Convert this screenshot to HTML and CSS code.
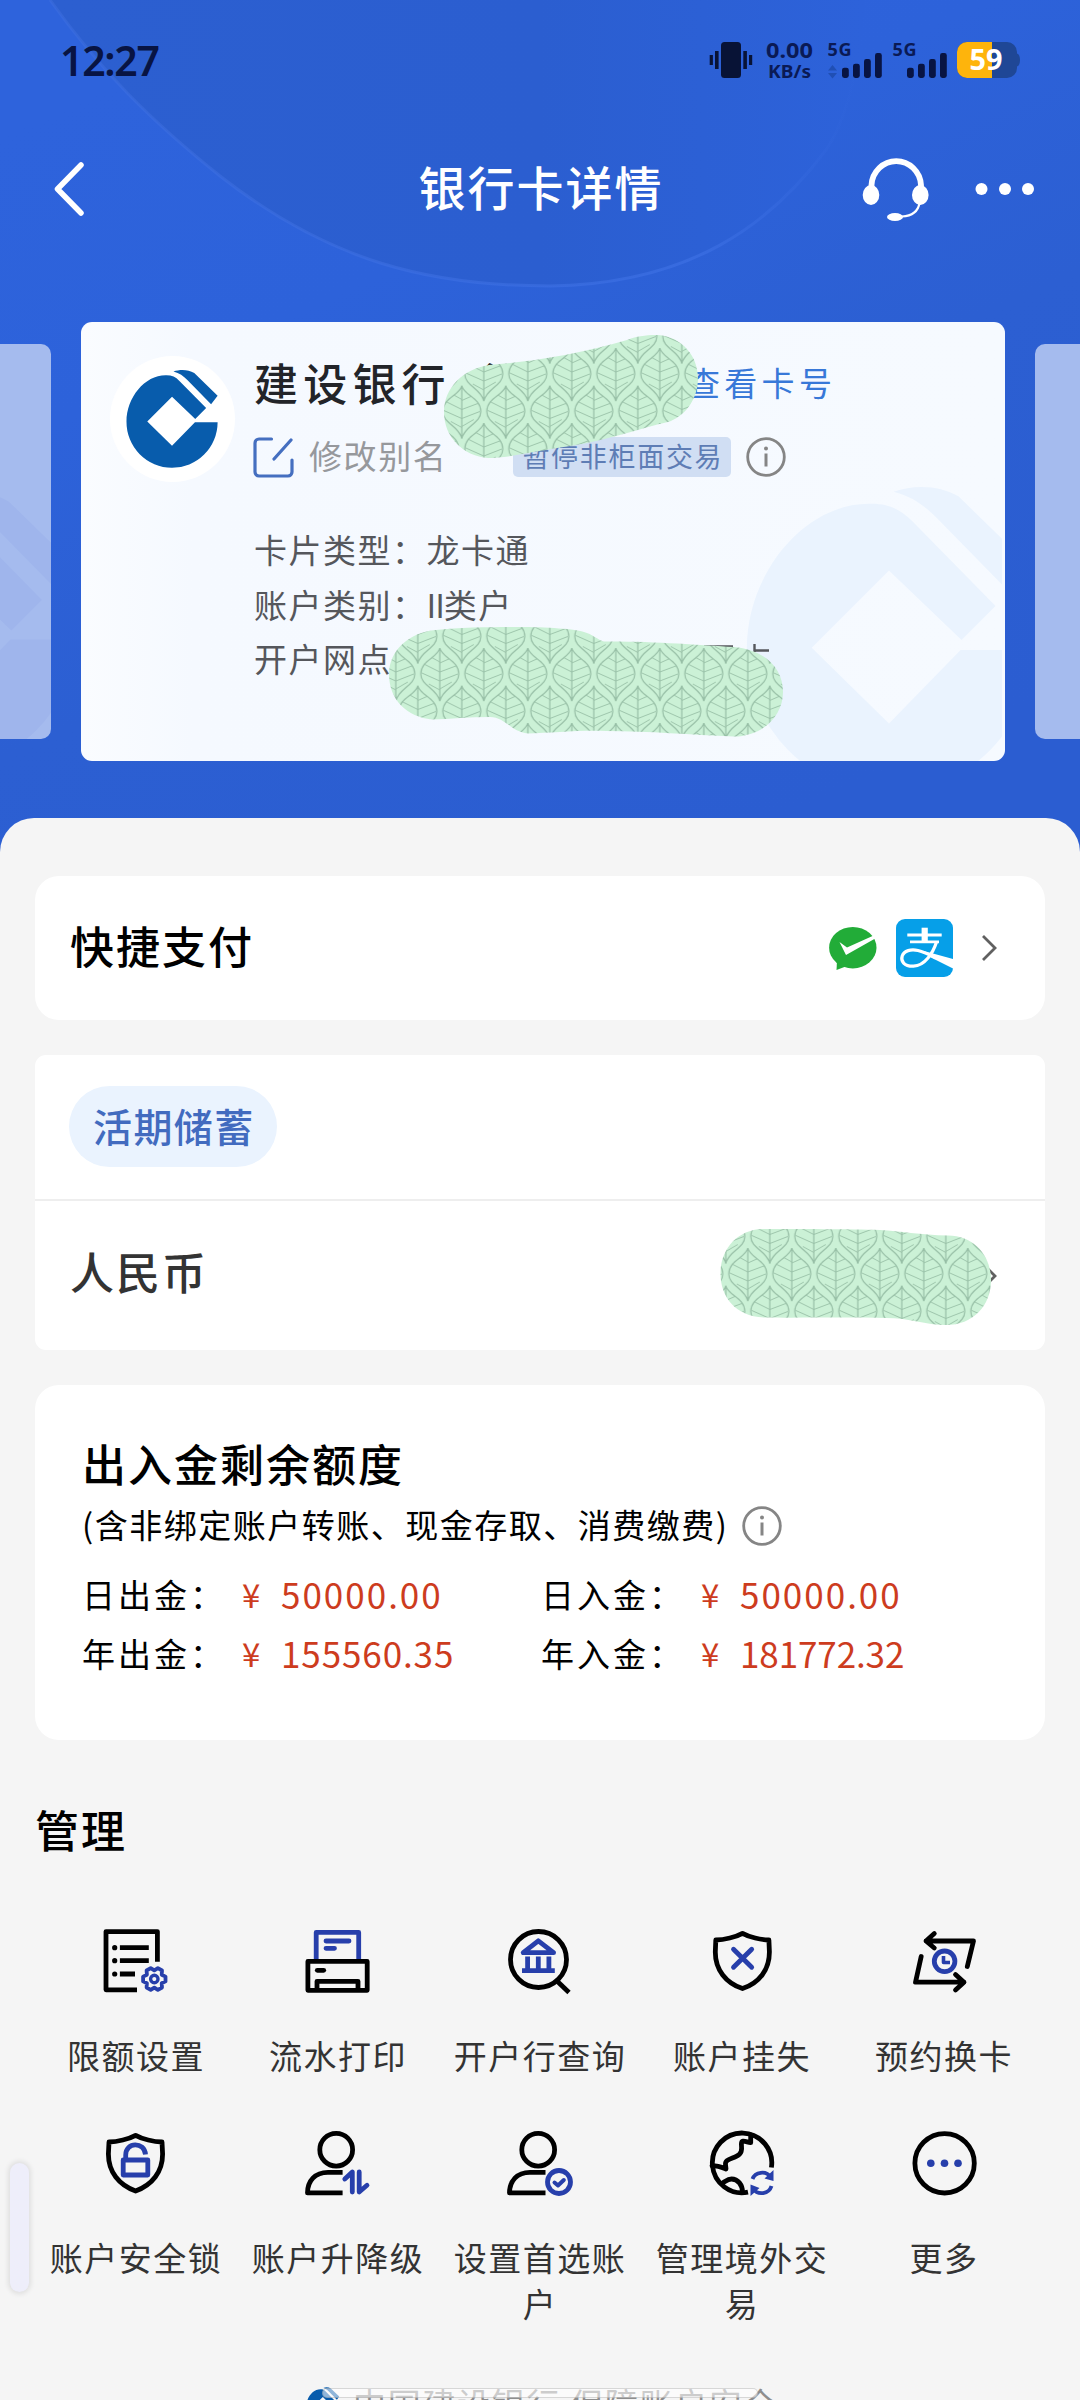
FILE: index.html
```html
<!DOCTYPE html>
<html lang="zh-CN">
<head>
<meta charset="utf-8">
<title>银行卡详情</title>
<link rel="stylesheet" href="styles.css">
</head>
<body>
<svg class="defs" width="0" height="0">
  <defs>
    <symbol id="ccb" viewBox="126 369 94 101">
      <path d="M218.6 422.7A46 46.3 0 0 1 126.5 422.3C126.5 398 145 375.4 166 375.4C172 375.2 176 377 180 381L207 408.5L196 419.5L172.5 397L147.5 422L172.5 446.5L195.7 422.7Z"/>
      <path d="M174 371.5C181 369 189 369.5 195 373L218.6 396L212 404.5L188 380C184 376 180 373 174 371.5Z"/>
    </symbol>
    <symbol id="info" viewBox="0 0 40 40">
      <circle cx="20" cy="20" r="18.3" fill="none" stroke="#858585" stroke-width="2.8"/>
      <circle cx="20" cy="11.5" r="2" fill="#858585"/>
      <path d="M20 16.5V29.5" stroke="#858585" stroke-width="3"/>
    </symbol>
    <g id="leaf" fill="none" stroke="#97bfa6" stroke-width="1.2">
      <path d="M0 0C2 10 19 12 19 26C19 38 3 40 0 53C-3 40-19 38-19 26C-19 12-2 10 0 0ZM0 0V53"/>
      <path stroke-width=".9" d="M0 14L-8 9.5M0 24L-16 16M0 33L-18 25M0 42L-11 36M0 15L9 11M0 24L16 18M0 33L18 26M0 41L12 34"/>
    </g>
    <pattern id="leaves" patternUnits="userSpaceOnUse" x="549.8" y="348" width="44" height="75">
      <rect width="44" height="75" fill="#cbf1d6"/>
      <use href="#leaf" x="22" y="0"/><use href="#leaf" x="22" y="75"/>
      <use href="#leaf" x="0" y="37.5"/><use href="#leaf" x="44" y="37.5"/>
      <use href="#leaf" x="0" y="-37.5"/><use href="#leaf" x="44" y="-37.5"/>
    </pattern>
    <linearGradient id="sky" x1=".1" y1=".1" x2=".6" y2="1">
      <stop offset="0" stop-color="#2e63dc"/><stop offset=".3" stop-color="#2d62da"/><stop offset=".6" stop-color="#2c5fd2"/><stop offset="1" stop-color="#2b5dd1"/>
    </linearGradient>
    <linearGradient id="bowl" x1="0" y1="0" x2="1" y2="0">
      <stop offset="0" stop-color="#2c5fd0"/><stop offset=".6" stop-color="#2b5ed0"/><stop offset="1" stop-color="#2d62da"/>
    </linearGradient>
    <linearGradient id="rim" x1="0" y1="0" x2="1" y2="0">
      <stop offset="0" stop-color="#4272e2" stop-opacity=".4"/><stop offset=".8" stop-color="#3f72e6" stop-opacity=".6"/><stop offset="1" stop-color="#3f72e6" stop-opacity="0"/>
    </linearGradient>
  </defs>
</svg>

<div class="page">
  <svg class="backdrop" viewBox="0 0 1080 880">
    <rect width="1080" height="880" fill="url(#sky)"/>
    <path d="M50 0C100 70 150 120 220 176C330 262 430 286 550 286C690 284 770 225 826 150C850 110 862 60 865 0Z" fill="url(#bowl)"/>
    <path d="M50 0C100 70 150 120 220 176C330 262 430 286 550 286C690 284 770 225 826 150C840 130 850 100 858 60" fill="none" stroke="url(#rim)" stroke-width="3"/>
  </svg>

  <header class="status">
    <span class="time">12:27</span>
    <svg class="status-icons" viewBox="708 30 314 60" width="314" height="60">
      <g fill="#081336">
        <rect x="721" y="42" width="20" height="36" rx="3.5"/>
        <rect x="715" y="51" width="3.6" height="18"/><rect x="709.7" y="55" width="3.2" height="10"/>
        <rect x="743.3" y="51" width="3.6" height="18"/><rect x="749" y="55" width="3.2" height="10"/>
      </g>
      <g fill="#0a1a55" class="net">
        <text x="766" y="57.5" font-size="20.5" textLength="47" lengthAdjust="spacingAndGlyphs">0.00</text>
        <text x="768" y="77.6" font-size="17.5" textLength="43" lengthAdjust="spacingAndGlyphs">KB/s</text>
        <text x="827.5" y="55.8" font-size="18" textLength="24">5G</text>
        <text x="892.5" y="55.8" font-size="18" textLength="24">5G</text>
      </g>
      <path d="M832.5 65L837 70.5H828ZM832.5 78.5L837 73H828Z" fill="#204fb4"/>
      <g fill="#081443">
        <rect x="842" y="67.7" width="6.8" height="10.3" rx="2.4"/><rect x="853" y="63.7" width="6.8" height="14.3" rx="2.4"/><rect x="864" y="59" width="6.8" height="19" rx="2.4"/><rect x="875" y="53" width="6.8" height="25" rx="2.4"/>
        <rect x="907" y="67.7" width="6.8" height="10.3" rx="2.4"/><rect x="918" y="63.7" width="6.8" height="14.3" rx="2.4"/><rect x="929" y="59" width="6.8" height="19" rx="2.4"/><rect x="940" y="53" width="6.8" height="25" rx="2.4"/>
      </g>
      <rect x="957" y="42" width="60" height="36" rx="10" fill="#1f4796"/>
      <path d="M1017 53.5C1021 54 1021 66 1017 66.5Z" fill="#1f4796"/>
      <path d="M967 42H992V78H967A10 10 0 0 1 957 68V52A10 10 0 0 1 967 42Z" fill="#feb40c"/>
      <text class="net" x="969.5" y="70" font-size="28" textLength="33" lengthAdjust="spacingAndGlyphs" fill="#fff">59</text>
    </svg>
  </header>

  <nav class="nav">
    <svg class="back" viewBox="0 0 36 60" width="36" height="60"><path d="M29 6L5.5 30L29 54" fill="none" stroke="#fff" stroke-width="5.5" stroke-linecap="round" stroke-linejoin="round"/></svg>
    <h1>银行卡详情</h1>
    <div class="nav-actions">
      <svg viewBox="860 152 72 72" width="72" height="72">
        <path d="M871.5 188V184A24.8 25.5 0 0 1 921 184V188" fill="none" stroke="#fff" stroke-width="5.8"/>
        <ellipse cx="871" cy="194" rx="8.3" ry="10" fill="#fff"/><ellipse cx="920.3" cy="194" rx="8.3" ry="10" fill="#fff"/>
        <path d="M919.5 202C918 211 911 215 902 215.5" fill="none" stroke="#fff" stroke-width="2.2"/>
        <ellipse cx="895" cy="216" rx="8" ry="4" fill="#fff"/>
      </svg>
      <svg viewBox="0 0 60 14" width="60" height="14"><g fill="#fff"><circle cx="6.5" cy="7" r="6"/><circle cx="30" cy="7" r="6"/><circle cx="53" cy="7" r="6"/></g></svg>
    </div>
  </nav>

  <section class="carousel">
    <div class="peek peek-left"><svg class="peek-mark"><use href="#ccb"/></svg></div>
    <article class="bank-card">
      <div class="mark"><svg width="291" height="312"><use href="#ccb"/></svg></div>
      <div class="logo"><svg width="93" height="100"><use href="#ccb"/></svg></div>
      <div class="card-info">
        <div class="name-row"><strong>建设银行（</strong><a>查看卡号</a></div>
        <div class="alias-row">
          <svg class="edit" viewBox="0 0 41 41" width="41" height="41"><path d="M18.5 2H6A4 4 0 0 0 2 6V35A4 4 0 0 0 6 39H35A4 4 0 0 0 39 35V23M38 3L21 22" fill="none" stroke="#456fc0" stroke-width="3.2" stroke-linecap="round"/></svg>
          <span class="alias">修改别名</span>
          <span class="tag">暂停非柜面交易</span>
          <svg class="info" width="40" height="40"><use href="#info"/></svg>
        </div>
        <div class="facts">
          <p>卡片类型：龙卡通</p>
          <p>账户类别：<span class="roman">II</span>类户</p>
          <p>开户网点</p>
        </div>
      </div>
      <svg class="cover cover-name" viewBox="440 330 262 132" width="262" height="132"><path fill="url(#leaves)" d="M489 365Q528 362 565 355Q600 348 627 340C640 335 650 335 658 335C683 337 698 357 698 378C698 400 684 417 668 422C640 428 610 440 570 446C540 450 510 458 488 458C464 456 444 438 444 412C444 388 463 369 489 365Z"/></svg>
      <svg class="cover cover-branch" viewBox="385 622 402 120" width="402" height="120">
        <path d="M682 644.5V650M704 646.5H733M754.5 644V652M754.5 650.5H769" fill="none" stroke="#55575c" stroke-width="2.4"/>
        <path fill="url(#leaves)" d="M436 630C460 627 500 627 520 627C545 627 577 629 584 632C592 634 598 640 604 641.5C650 641 700 645 734 647C765 650 783 668 783 692C783 716 763 736 734 736.5C690 735 650 731 606 731C580 730 550 733 528 733.5C511 732 505 717 490 717C470 717 450 719 432 719.5C407 717 389 700 389 674C389 650 410 632 436 630Z"/>
      </svg>
    </article>
    <div class="peek peek-right"></div>
  </section>

  <main class="sheet">
    <section class="panel quick">
      <h2>快捷支付</h2>
      <div class="pay">
        <svg viewBox="0 0 48 43" width="48" height="43"><path d="M8 34L7.5 43L18 39Z" fill="#22ac38"/><ellipse cx="23.8" cy="20.7" rx="23.7" ry="20.7" fill="#22ac38"/><path d="M10.5 15L18 20.5L48 7V10.5L17 28Z" fill="#fff"/></svg>
        <svg class="alipay" viewBox="0 0 57 58" width="57" height="58"><rect width="57" height="58" rx="9" fill="#069fe8"/><path d="M11.3 16H45.7M14 22.8H43" stroke="#fff" stroke-width="2.8"/><path d="M28.7 8.7V23" stroke="#fff" stroke-width="6.2"/><path d="M40.5 23C37 34 29 46.5 17.5 47.2C8 47.5 4.5 42 6.2 37C8 31.5 15 30 22 31.5C28 33 34 36 40 39" fill="none" stroke="#fff" stroke-width="3.2"/><path d="M27 31.8L57 40V49.5L34 38Z" fill="#fff"/></svg>
        <svg class="chev" viewBox="0 0 16 28" width="16" height="28"><path d="M2 2L14 14L2 26" fill="none" stroke="#606060" stroke-width="2.8"/></svg>
      </div>
    </section>

    <section class="panel deposit">
      <div class="deposit-head"><span class="pill">活期储蓄</span></div>
      <div class="deposit-row">
        <span>人民币</span>
        <svg class="chev" viewBox="0 0 16 28" width="16" height="28"><path d="M2 2L14 14L2 26" fill="none" stroke="#606060" stroke-width="2.8"/></svg>
        <svg class="cover cover-balance" viewBox="716 1225 280 104" width="280" height="104"><path fill="url(#leaves)" d="M762 1229C800 1229 850 1229 880 1230C900 1231 920 1235 948 1235.5C975 1236 991 1256 991 1280C991 1306 973 1325 946 1325C925 1325 910 1318 886 1318C850 1317 800 1318 765 1317.5C735 1317 720.5 1296 720.5 1274C720.5 1248 738 1230 762 1229Z"/></svg>
      </div>
    </section>

    <section class="panel quota">
      <h2>出入金剩余额度</h2>
      <div class="note"><span>(含非绑定账户转账、现金存取、消费缴费)</span><svg width="40" height="40"><use href="#info"/></svg></div>
      <dl class="amounts">
        <dt>日出金：</dt><dd class="loose"><i>¥</i>50000.00</dd><dt>日入金：</dt><dd class="loose"><i>¥</i>50000.00</dd>
        <dt>年出金：</dt><dd><i>¥</i>155560.35</dd><dt>年入金：</dt><dd class="tight"><i>¥</i>181772.32</dd>
      </dl>
    </section>

    <h2 class="manage-title">管理</h2>
    <ul class="grid">
      <li><svg viewBox="0 0 72 72"><path d="M37 64.8H6V6.6H57.4V36.7"/><path d="M19.9 22.7H48.8M19.9 35.7H48.8M19.9 49H35"/><g class="dot"><circle cx="14.7" cy="22.7" r="2.6"/><circle cx="14.7" cy="35.7" r="2.6"/><circle cx="14.7" cy="49" r="2.6"/></g><g class="b" transform="translate(54.3 54)"><path stroke-width="3.8" d="M11.2-2.4V2.4L7.4 4.3L7.7 8.5L3.6 10.9L0 8.6L-3.6 10.9L-7.7 8.5L-7.4 4.3L-11.2 2.4V-2.4L-7.4-4.3L-7.7-8.5L-3.6-10.9L0-8.6L3.6-10.9L7.7-8.5L7.4-4.3Z"/><circle r="3.7" stroke-width="3.4"/></g></svg><span>限额设置</span></li>
      <li><svg viewBox="0 0 72 72"><path class="b" d="M14.2 35V7.4H56.7V35"/><path class="b r" d="M24 16H47M24 23.3H32.5"/><path d="M5.9 36.4H65.2V65.3H5.9Z"/><path d="M15 65V56.3H56V65"/><path class="r" d="M15.3 45.3H21.7"/></svg><span>流水打印</span></li>
      <li><svg viewBox="0 0 72 72"><circle cx="34.5" cy="34.5" r="28"/><path d="M53.5 56.5L65 67.5"/><path class="b" d="M34.3 15.8L19.2 27.7H49.6Z"/><path class="b" d="M23.6 31.5V44M34.3 31.5V44M44.9 31.5V44M18 45.7H50.8"/></svg><span>开户行查询</span></li>
      <li><svg viewBox="0 0 72 72"><path d="M36.5 8.3C30 12 18 14.8 9.8 15L9.3 27C9.3 45 20 58 36.5 63.6C53 58 63.4 45 63.4 27L62.9 15C55 14.8 43 12 36.5 8.3Z"/><path class="b r" d="M27.5 24.2L45.7 42.2M45.7 24.2L27.5 42.2"/></svg><span>账户挂失</span></li>
      <li><svg viewBox="0 0 72 72"><path class="r" d="M26.3 8.5L18 16L26.3 23M18 16H65.5L59.3 41.5M13.2 31.5L7.5 57.2H56M47.5 49.5L56 57.2L47.5 65"/><circle class="b" cx="36.6" cy="36.3" r="10.3"/><path class="b" stroke-width="3.6" d="M35.5 31V37.5H42"/></svg><span>预约换卡</span></li>
      <li><svg viewBox="0 0 72 72"><path d="M35.6 8.3C29 12 17 14.8 9 15L8.4 27C8.4 45 19 58 35.6 64C52 58 62.6 45 62.6 27L62 15C54 14.8 42 12 35.6 8.3Z"/><path class="b" d="M23.2 33H47.8V48H23.2Z"/><path class="b" d="M25.7 32V28C25.7 14.5 44.5 14.5 45.5 27.5"/></svg><span>账户安全锁</span></li>
      <li><svg viewBox="0 0 72 72"><circle cx="34.2" cy="22.7" r="16.4"/><path d="M40.6 45.3H26C13 45.3 5.5 54 5.5 65.9H40.6"/><path class="b r" d="M42.8 52L50.3 45V65M57.2 45V65L65 58.3"/></svg><span>账户升降级</span></li>
      <li><svg viewBox="0 0 72 72"><circle cx="34.2" cy="22.7" r="16.4"/><path d="M41.5 45.3H26C13 45.3 5.5 54 5.5 65.9H41.5"/><circle class="b" cx="55" cy="55" r="11.5"/><path class="b r" stroke-width="4" d="M50.5 55.5L54 58.5L59.8 53"/></svg><span>设置首选账户</span></li>
      <li><svg viewBox="0 0 72 72"><path d="M65.4 40.5A29.7 29.9 0 1 0 42 65.2"/><path class="r" d="M44.7 8V15.7C40 15 35.4 12 35.4 17C36 23 36 27 30 29.5C23 32.5 19 33 19.5 37.5L20 42C15 40 12 38.7 6 38.7"/><path class="r" d="M16.5 56C20 54 21.7 52 25.5 52C32 52 36.5 58 36.5 65"/><g class="b thin"><path d="M46.5 52C49 45 60 43 65 50.5M65.5 59C63 67 52 69 47 61.5"/></g><path class="bf" d="M67.5 43V54L58.5 51.5ZM44.5 69V57.5L53.5 61Z"/></svg><span>管理境外交易</span></li>
      <li><svg viewBox="0 0 72 72"><circle cx="36.6" cy="36.3" r="29.7"/><g class="bf"><circle cx="22.8" cy="36.3" r="3.8"/><circle cx="36.5" cy="36.3" r="3.8"/><circle cx="50" cy="36.3" r="3.8"/></g></svg><span>更多</span></li>
    </ul>

    <footer class="foot"><svg width="34" height="36"><use href="#ccb"/></svg><span>中国建设银行 保障账户安全</span></footer>
  </main>

  <div class="side-handle"></div>
  <div class="home-bar"></div>
</div>
</body>
</html>
```
FILE: styles.css
```css
* { box-sizing: border-box; margin: 0; padding: 0; }

body {
  width: 1080px;
  height: 2400px;
  overflow: hidden;
  background: #f5f5f5;
  font-family: "Noto Sans CJK SC", "Noto Sans", sans-serif;
  color: #000;
}

svg { display: block; flex: none; }
.defs { position: absolute; }

.page { position: relative; height: 2400px; overflow: hidden; }
.backdrop { position: absolute; left: 0; top: 0; width: 1080px; height: 880px; }

.status {
  position: relative;
  height: 120px;
  padding: 0 58px 0 60px;
  display: flex;
  align-items: center;
  justify-content: space-between;
}
.time {
  font: 600 41px/60px "Noto Sans", sans-serif;
  letter-spacing: -1.3px;
  margin-top: -1px;
  color: #081443;
}
.net { font-family: "Noto Sans", sans-serif; font-weight: 700; }

.nav {
  position: relative;
  height: 138px;
  padding: 0 45px 0 52px;
  display: grid;
  grid-template-columns: 1fr auto 1fr;
  align-items: center;
}
.nav h1 {
  font-size: 47px;
  line-height: 60px;
  font-weight: 500;
  letter-spacing: 2px;
  color: #fff;
  margin: -7px 0 0 -5px;
}
.nav-actions { display: flex; align-items: center; justify-content: flex-end; gap: 43px; }

.carousel {
  position: relative;
  padding-top: 64px;
  display: flex;
  align-items: center;
  gap: 30px;
}
.peek { position: relative; height: 395px; background: #a5bbee; overflow: hidden; }
.peek-left { width: 51px; border-radius: 0 10px 10px 0; }
.peek-right { width: 45px; border-radius: 10px 0 0 10px; }
.peek-mark { position: absolute; left: -183px; top: 146px; width: 261px; height: 281px; fill: #9fb5ec; }

.bank-card {
  position: relative;
  width: 924px;
  height: 439px;
  padding: 30px 0 0 29px;
  display: flex;
  gap: 19px;
  border-radius: 11px;
  background: linear-gradient(90deg, #fafcff 0, #f5f9ff 12%, #f6faff 100%);
}
.mark {
  position: absolute;
  left: 664px;
  top: 162px;
  width: 257px;
  height: 277px;
  fill: #eaf3fe;
  overflow: hidden;
}
.logo {
  position: relative;
  width: 125px;
  height: 126px;
  margin-top: 4px;
  border-radius: 50%;
  background: #fff;
  display: flex;
  align-items: center;
  justify-content: center;
  fill: #085cac;
}
.card-info { position: relative; }
.name-row { height: 60px; display: flex; align-items: center; white-space: nowrap; }
.name-row strong { font-size: 44px; line-height: 60px; font-weight: 500; letter-spacing: 5.2px; color: #222429; }
.name-row a { margin-left: 187px; font-size: 33px; line-height: 60px; letter-spacing: 4.3px; color: #3878d8; }
.alias-row { height: 50px; margin: 20px 0 0 -1px; display: flex; align-items: center; white-space: nowrap; }
.alias { margin: -5px 0 0 15px; font-size: 33px; line-height: 50px; letter-spacing: 1.6px; color: #96989c; }
.tag {
  width: 218px;
  height: 40px;
  margin-left: 66px;
  padding-left: 9px;
  border-radius: 5px;
  background: #d0def3;
  font-size: 27px;
  line-height: 37px;
  letter-spacing: 1.7px;
  color: #5e7db5;
}
.info { margin-left: 15px; }
.facts { margin-top: 40px; font-size: 33px; line-height: 54.5px; letter-spacing: 1.5px; color: #55575c; white-space: nowrap; }
.roman { letter-spacing: -1px; }

.cover { position: absolute; }
.cover-name { left: 359px; top: 8px; }
.cover-branch { left: 304px; top: 300px; }
.cover-balance { left: 681px; top: 24px; }

.sheet {
  position: relative;
  height: 1582px;
  margin-top: 57px;
  padding: 58px 35px 0;
  border-radius: 34px 34px 0 0;
  background: #f5f5f5;
}
.panel { background: #fff; border-radius: 24px; }
h2 { font-size: 44px; line-height: 60px; font-weight: 500; letter-spacing: 2px; }

.quick { height: 144px; padding: 0 48px 0 35px; display: flex; align-items: center; justify-content: space-between; }
.quick h2 { margin-top: -6px; }
.pay { display: flex; align-items: center; }
.alipay { margin: 0 28px 0 19px; }

.deposit { height: 295px; margin-top: 35px; border-radius: 11px; }
.deposit-head { height: 146px; padding-left: 34px; border-bottom: 2px solid #eee; display: flex; align-items: center; }
.pill {
  height: 81px;
  margin-top: -1px;
  padding: 0 22px 0 24px;
  border-radius: 41px;
  background: #eaf3fe;
  font-size: 39px;
  font-weight: 500;
  line-height: 78px;
  letter-spacing: 1.4px;
  color: #426bbf;
}
.deposit-row {
  position: relative;
  height: 149px;
  padding: 0 48px 0 35px;
  display: flex;
  align-items: center;
  justify-content: space-between;
  font-size: 44px;
  font-weight: 500;
  letter-spacing: 2px;
  color: #333;
}
.deposit-row span { line-height: 60px; margin-top: -10px; }

.quota { height: 355px; margin-top: 35px; padding: 48px 0 0 47px; }
.note { height: 50px; margin-top: 8px; margin-bottom: 14px; display: flex; align-items: center; gap: 14px; font-size: 33px; line-height: 50px; letter-spacing: 1.5px; white-space: nowrap; }
.note span { margin-top: -4px; }
.amounts { display: grid; grid-template-columns: 160px 299px 160px 300px; font-size: 33px; line-height: 58.5px; }
.amounts dt { letter-spacing: 3px; white-space: nowrap; }
.amounts dd { display: flex; font-size: 35px; letter-spacing: 0.9px; color: #cd3c1e; }
.amounts .loose { letter-spacing: 2px; }
.amounts .tight { letter-spacing: -0.1px; }
.amounts i { width: 39px; font-style: normal; font-size: 33px; }

.manage-title { margin: 59px 0 0; }
.grid {
  list-style: none;
  margin-top: 66px;
  display: grid;
  grid-template-columns: repeat(5, 202px);
  grid-template-rows: 202px 240px;
}
.grid li { display: flex; flex-direction: column; align-items: center; gap: 35px; }
.grid svg { width: 72px; height: 72px; fill: none; stroke: #000; stroke-width: 4.8; stroke-linejoin: round; }
.grid .dot { fill: #000; stroke: none; }
.grid .b { stroke: #273fab; }
.grid .bf { fill: #273fab; stroke: none; }
.grid .r { stroke-linecap: round; }
.grid .thin { stroke-width: 3.8; }
.grid span { width: 180px; text-align: center; font-size: 33px; line-height: 46px; letter-spacing: 1.5px; color: #333; }

.foot { height: 50px; margin-top: 13px; display: flex; align-items: center; padding-left: 271px; gap: 13px; fill: #085cac; font-size: 33px; line-height: 50px; letter-spacing: 1.7px; color: #8e8e8e; white-space: nowrap; }
.foot span { margin-top: -4px; }

.side-handle {
  position: absolute;
  left: 10px;
  top: 2163px;
  width: 19px;
  height: 129px;
  border-radius: 10px;
  background: #eeeefa;
  box-shadow: 0 0 5px 2px rgba(0, 0, 0, .09);
}
.home-bar {
  position: absolute;
  left: 322px;
  top: 2388px;
  width: 436px;
  height: 10px;
  border: 1px solid rgba(0, 0, 0, .14);
  border-radius: 5px;
  background: rgba(255, 255, 255, .55);
}
```
